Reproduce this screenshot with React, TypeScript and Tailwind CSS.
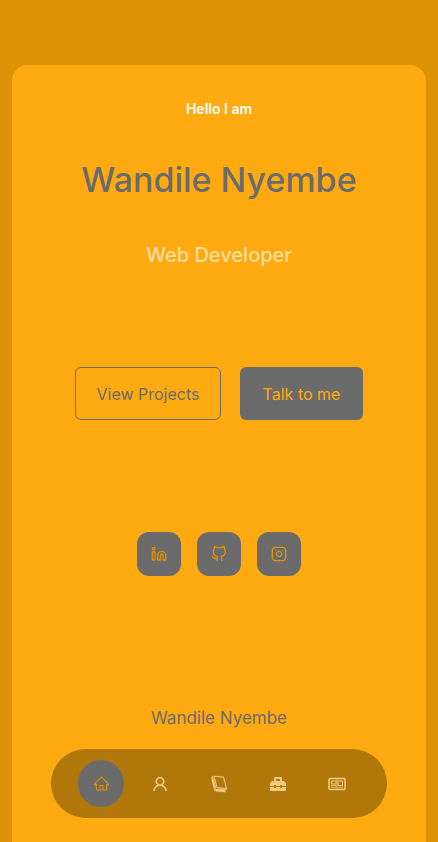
import type { ReactNode } from "react";
import { FiGithub, FiInstagram, FiLinkedin } from "react-icons/fi";
import { AiOutlineHome, AiOutlineUser } from "react-icons/ai";
import { GiBlackBook } from "react-icons/gi";
import { FaToolbox } from "react-icons/fa";

function NewspaperIcon() {
  return (
    <svg width="18" height="18" viewBox="0 0 18 18" fill="none" stroke="currentColor" aria-hidden="true">
      <rect x="1" y="3.5" width="16" height="11" rx="1" strokeWidth="1.5" />
      <path d="M3.5 6h4.5v3H3.5zM10 6h4.5v4.5H10z" strokeWidth="1" />
      <path d="M3 10.5h5.5M3 12.3h5.5M9.7 12.3h5.3M9 4v10" strokeWidth="0.8" />
    </svg>
  );
}

const socials: { label: string; icon: ReactNode }[] = [
  { label: "LinkedIn", icon: <FiLinkedin size={16} strokeWidth={2} /> },
  { label: "GitHub", icon: <FiGithub size={16} strokeWidth={2} /> },
  { label: "Instagram", icon: <FiInstagram size={16} strokeWidth={2} /> },
];

const sections: { label: string; icon: ReactNode }[] = [
  { label: "Home", icon: <AiOutlineHome size={17} /> },
  { label: "About", icon: <AiOutlineUser size={18} stroke="currentColor" strokeWidth={20} /> },
  { label: "Experience", icon: <GiBlackBook size={18} stroke="currentColor" strokeWidth={10} /> },
  { label: "Skills", icon: <FaToolbox size={16} /> },
  { label: "News", icon: <NewspaperIcon /> },
];

export default function App() {
  return (
    <div className="min-h-screen bg-[#de9205] px-3 pt-[65px] font-['Inter',sans-serif] text-[#6b6b6b]">
      <main className="flex min-h-[calc(100vh-65px)] flex-col items-center rounded-t-2xl bg-[#ffaa11] pt-8 pb-28 text-center">
        <p className="text-sm leading-6 font-semibold text-white">Hello I am</p>
        <h1 className="mt-9 text-[34px] leading-[46px] font-medium">Wandile Nyembe</h1>
        <h2 className="mt-9 text-xl leading-8 font-medium text-[#ffdd9e]">Web Developer</h2>
        <div className="mt-24 flex justify-center gap-[19px] text-base">
          <button className="h-[53px] w-[146px] rounded-md border border-[#6b6b6b]">View Projects</button>
          <button className="h-[53px] w-[123px] rounded-md bg-[#6b6b6b] text-[#ffaa11]">Talk to me</button>
        </div>
        <div className="mt-28 flex gap-4 text-[#de9205]">
          {socials.map((s) => (
            <a key={s.label} href="#" aria-label={s.label} className="flex size-11 items-center justify-center rounded-xl bg-[#6b6b6b]">
              {s.icon}
            </a>
          ))}
        </div>
        <footer className="mt-32 text-[17px] leading-7">Wandile Nyembe</footer>
      </main>
      <nav className="fixed bottom-6 left-1/2 flex -translate-x-1/2 gap-[13px] rounded-full bg-[#b1770a] px-[27px] py-[11px] text-[#f2cb80]">
        {sections.map((s, i) => (
          <a
            key={s.label}
            href="#"
            aria-label={s.label}
            className={`flex h-[47px] w-[46px] items-center justify-center rounded-full ${i === 0 ? "bg-[#6b6b6b] text-[#de9205]" : ""}`}
          >
            {s.icon}
          </a>
        ))}
      </nav>
    </div>
  );
}
